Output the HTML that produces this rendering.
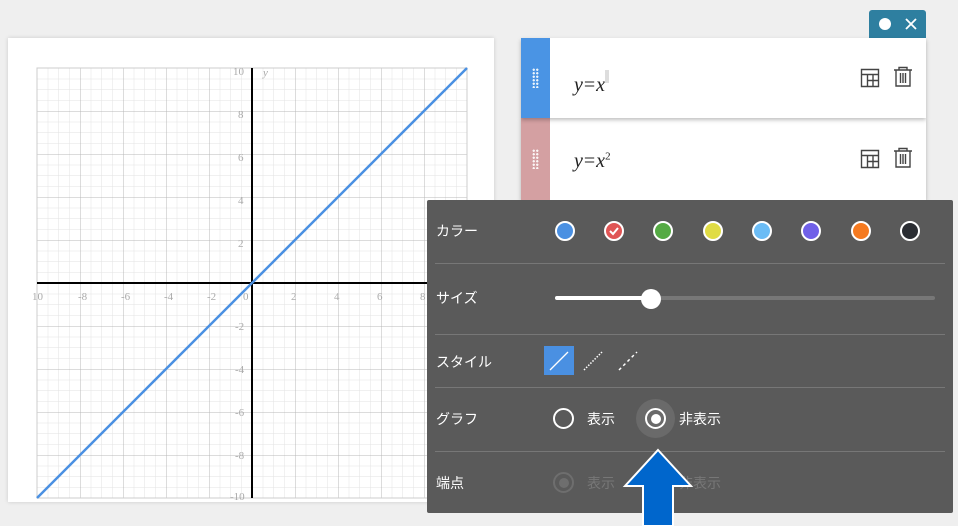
<!DOCTYPE html>
<html><head><meta charset="utf-8">
<style>
*{margin:0;padding:0;box-sizing:border-box}
body{width:958px;height:519px;background:#efefef;position:relative;overflow:hidden;font-family:"Liberation Sans","Noto Sans CJK JP",sans-serif}
.card{position:absolute;left:8px;top:38px;width:486px;height:464px;background:#fff;box-shadow:0 0 4px rgba(0,0,0,.15)}
.eq{position:absolute;left:521px;width:405px;background:#fff;box-shadow:0 2px 4px rgba(0,0,0,.25)}
.strip{position:absolute;left:0;top:0;bottom:0;width:29px}
.dots{position:absolute;left:11px;width:7px;height:20px;background-image:radial-gradient(circle,rgba(255,255,255,.9) 1px,transparent 1.3px);background-size:3.5px 3.5px}
.math{position:absolute;left:53px;font-family:"Liberation Serif",serif;font-style:italic;font-size:20px;color:#222}
.math .eqs{font-style:normal;margin:0 1px}
.math sup{font-size:11px;font-style:normal}
.top{position:absolute;left:869px;top:10px;width:57px;height:28px;background:#2e7fa0;border-radius:3px 3px 0 0}
.panel{position:absolute;left:427px;top:200px;width:526px;height:313px;background:#5a5a5a;border-radius:2px;color:#fff;font-size:14px}
.lbl{position:absolute;left:9px}
.hr{position:absolute;left:8px;right:8px;height:1px;background:#777}
.c{position:absolute;width:20px;height:20px;border-radius:50%;border:2px solid #fff;top:21px}
.rad{position:absolute;width:21px;height:21px;border-radius:50%;border:2px solid #fff}
</style></head><body>
<div class="card"></div>
<svg style="position:absolute;left:0;top:0" width="500" height="519">
<defs>
<pattern id="mi" x="37" y="68" width="10.75" height="10.75" patternUnits="userSpaceOnUse"><path d="M0 0V10.75M0 0H10.75" stroke="#e2e2e2" stroke-width="1" fill="none"/></pattern>
<pattern id="ma" x="37" y="68" width="43" height="43" patternUnits="userSpaceOnUse"><path d="M0 0V43M0 0H43" stroke="#b8b8b8" stroke-width="1" fill="none"/></pattern>
</defs>
<rect x="37" y="68" width="430" height="430" fill="url(#mi)"/>
<rect x="37" y="68" width="430" height="430" fill="url(#ma)"/>
<rect x="37" y="68" width="430" height="430" fill="none" stroke="#ccc"/>
<line x1="37" y1="283" x2="467" y2="283" stroke="#000" stroke-width="2"/>
<line x1="252" y1="68" x2="252" y2="498" stroke="#000" stroke-width="2"/>
<g font-family="Liberation Serif" font-size="11" fill="#aaa">
<text x="32" y="300">10</text><text x="78" y="300">-8</text><text x="121" y="300">-6</text><text x="164" y="300">-4</text><text x="207" y="300">-2</text><text x="243" y="300">0</text><text x="291" y="300">2</text><text x="334" y="300">4</text><text x="377" y="300">6</text><text x="420" y="300">8</text>
<text x="233" y="75">10</text><text x="238" y="118">8</text><text x="238" y="161">6</text><text x="238" y="204">4</text><text x="238" y="247">2</text>
<text x="235" y="330">-2</text><text x="235" y="373">-4</text><text x="235" y="416">-6</text><text x="235" y="459">-8</text><text x="230" y="500">-10</text>
<text x="263" y="76" font-style="italic">y</text>
</g>
<line x1="37" y1="498" x2="467" y2="68" stroke="#4a90e2" stroke-width="2.5"/>
<path d="M516 122 Q507 118 506 150 L508 200" stroke="#888" fill="none"/>
</svg>
<div class="top"><div style="position:absolute;left:10px;top:8px;width:12px;height:12px;border-radius:50%;background:#fff"></div>
<svg style="position:absolute;left:36px;top:8px" width="12" height="12"><path d="M1 1L11 11M11 1L1 11" stroke="#fff" stroke-width="1.8"/></svg></div>
<div class="eq" style="top:118px;height:82px;z-index:1"><div class="strip" style="background:#d4a0a2"><div class="dots" style="top:31px"></div></div>
<div class="math" style="top:32px">y<span class="eqs">=</span>x<sup>2</sup></div>
<svg style="position:absolute;left:339px;top:31px" width="20" height="20"><path d="M1.5 1.5H18.5V18.5H1.5ZM1.5 6.5H18.5M7.5 6.5V18.5M7.5 12.5H18.5M13 6.5V18.5" stroke="#444" stroke-width="1.4" fill="none"/></svg>
<svg style="position:absolute;left:372px;top:29px" width="20" height="22"><path d="M1 4H19M6 4V1.5H14V4M3 4V20H17V4M7.5 7V17M10 7V17M12.5 7V17" stroke="#444" stroke-width="1.4" fill="none"/></svg></div>
<div class="eq" style="top:38px;height:80px;z-index:2"><div class="strip" style="background:#4a94e4"><div class="dots" style="top:30px"></div></div>
<div class="math" style="top:32px">y<span class="eqs">=</span>x<span style="display:inline-block;width:4px;height:13px;background:#ddd;vertical-align:8px"></span></div>
<svg style="position:absolute;left:339px;top:30px" width="20" height="20"><path d="M1.5 1.5H18.5V18.5H1.5ZM1.5 6.5H18.5M7.5 6.5V18.5M7.5 12.5H18.5M13 6.5V18.5" stroke="#444" stroke-width="1.4" fill="none"/></svg>
<svg style="position:absolute;left:372px;top:28px" width="20" height="22"><path d="M1 4H19M6 4V1.5H14V4M3 4V20H17V4M7.5 7V17M10 7V17M12.5 7V17" stroke="#444" stroke-width="1.4" fill="none"/></svg></div>
<div class="panel" style="z-index:3">
<div class="lbl" style="top:21px">カラー</div>
<div class="c" style="left:128px;background:#4a90e2"></div>
<div class="c" style="left:177px;background:#e05555"><svg width="16" height="16" style="position:absolute;left:0;top:0"><path d="M4 8L7 11L12 5" stroke="#fff" stroke-width="2" fill="none"/></svg></div>
<div class="c" style="left:226px;background:#55aa44"></div>
<div class="c" style="left:276px;background:#e0dc44"></div>
<div class="c" style="left:325px;background:#6bbcf5"></div>
<div class="c" style="left:374px;background:#7060e8"></div>
<div class="c" style="left:424px;background:#f57a20"></div>
<div class="c" style="left:473px;background:#2a2d32"></div>
<div class="hr" style="top:63px"></div>
<div class="lbl" style="top:88px">サイズ</div>
<div style="position:absolute;left:128px;top:96px;width:380px;height:4px;background:#777;border-radius:2px"></div>
<div style="position:absolute;left:128px;top:96px;width:96px;height:4px;background:#fff;border-radius:2px"></div>
<div style="position:absolute;left:214px;top:89px;width:20px;height:20px;background:#fff;border-radius:50%"></div>
<div class="hr" style="top:134px"></div>
<div class="lbl" style="top:152px">スタイル</div>
<div style="position:absolute;left:117px;top:146px;width:30px;height:29px;background:#4a90e2"></div>
<svg style="position:absolute;left:117px;top:146px" width="100" height="30"><path d="M6 24L24 6" stroke="#fff" stroke-width="1.3"/><path d="M40 24L58 6" stroke="#fff" stroke-width="1.5" stroke-dasharray="1.5 1.5"/><path d="M75 24L93 6" stroke="#fff" stroke-width="1.5" stroke-dasharray="3 3"/></svg>
<div class="hr" style="top:187px"></div>
<div class="lbl" style="top:209px">グラフ</div>
<div class="rad" style="left:126px;top:208px"></div><div style="position:absolute;left:160px;top:209px">表示</div>
<div style="position:absolute;left:209px;top:199px;width:39px;height:39px;border-radius:50%;background:#6a6a6a"></div>
<div class="rad" style="left:218px;top:208px"><div style="position:absolute;left:3.5px;top:3.5px;width:10px;height:10px;border-radius:50%;background:#fff"></div></div>
<div style="position:absolute;left:252px;top:209px">非表示</div>
<div class="hr" style="top:251px"></div>
<div class="lbl" style="top:273px">端点</div>
<div class="rad" style="left:126px;top:272px;border-color:#6e6e6e"><div style="position:absolute;left:3.5px;top:3.5px;width:10px;height:10px;border-radius:50%;background:#6e6e6e"></div></div>
<div style="position:absolute;left:160px;top:273px;color:#777">表示</div>
<div style="position:absolute;left:252px;top:273px;color:#777">非表示</div>
</div>
<svg style="position:absolute;left:620px;top:446px;z-index:4" width="80" height="80"><path d="M38 4L71 40H53V80H23V40H5Z" fill="#0066cc" stroke="#fff" stroke-width="2"/></svg>
</body></html>
